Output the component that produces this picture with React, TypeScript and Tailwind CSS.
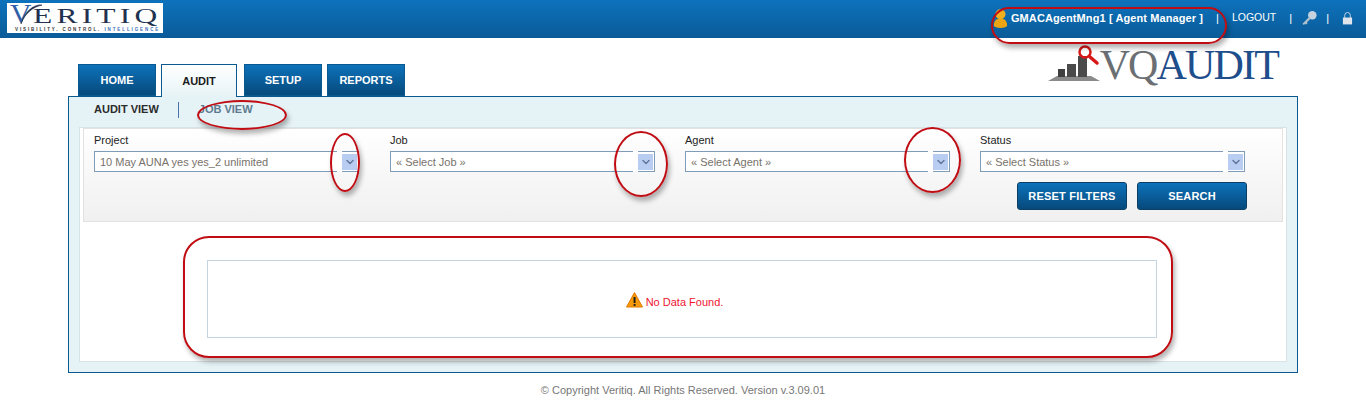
import React from 'react';
import { ChevronDown } from 'lucide-react';

const tabs = [
  { label: 'HOME', width: 'w-[78px]' },
  { label: 'AUDIT', width: 'w-[76px]', active: true },
  { label: 'SETUP', width: 'w-[78px]' },
  { label: 'REPORTS', width: 'w-[78px]' },
];

const filters = [
  { label: 'Project', value: '10 May AUNA yes yes_2 unlimited' },
  { label: 'Job', value: '« Select Job »' },
  { label: 'Agent', value: '« Select Agent »' },
  { label: 'Status', value: '« Select Status »' },
];

const Select = ({ label, value }: { label: string; value: string }) => (
  <div className="w-[265px]">
    <div className="h-[22px] text-[11px] leading-[22px] text-[#222]">{label}</div>
    <div className="relative flex h-[21px] w-[265px] items-center border border-[#7f9db9] bg-white">
      <span className="flex-1 pl-[5px] pt-[1px] text-[11px] text-[#77726a]">{value}</span>
      <span className="mr-[1px] flex h-[16px] w-[15px] items-center justify-center bg-[#b9cdf2]">
        <ChevronDown className="h-[12px] w-[12px] text-[#64789c]" strokeWidth={3} />
      </span>
      {/* gap between text field and arrow */}
      <span className="absolute right-[16px] top-[-1px] h-[21px] w-[5px] bg-white" />
    </div>
  </div>
);

const BlueButton = ({ children }: { children: React.ReactNode }) => (
  <button className="h-[28px] w-[110px] rounded-[3px] border border-[#0b3f66] bg-gradient-to-b from-[#0e72ba] to-[#064a7c] text-[11px] font-bold tracking-[0.2px] text-white">
    {children}
  </button>
);

const VeritiqLogo = () => (
  <div className="relative ml-[7px] mt-[3px] h-[30px] w-[156px] bg-white pl-[3px]">
    <div className="flex h-[24px] items-end font-['Liberation_Serif',serif] text-[#22314f]">
      <span className="w-[23px] origin-bottom-left scale-x-110 text-[27px] leading-[25px] text-[#2f5fa8]">V</span>
      <span className="origin-bottom-left scale-x-150 whitespace-nowrap text-[21px] leading-[21px] tracking-[2.8px]">ERITIQ</span>
    </div>
    <div className="ml-[5px] whitespace-nowrap text-[4.5px] font-bold leading-[6px] tracking-[1.9px] text-[#333]">
      VISIBILITY. CONTROL. <span className="text-[#3b6db5]">INTELLIGENCE</span>
    </div>
    {/* swoosh across the V */}
    <svg width="36" height="22" viewBox="0 0 36 22" className="absolute left-0 top-[1px]">
      <path d="M35 1 C28 0 18 6 14 20 C18 9 26 3 35 1 Z" fill="#1f2a44" stroke="#1f2a44" strokeWidth="0.6" />
    </svg>
  </div>
);

const AuditLogo = () => (
  <div className="mb-[11px] mr-[20px] flex items-start">
    <svg width="52" height="40" viewBox="0 0 52 40">
      <path d="M0 36 L9 31 H43 L52 36 Z" fill="#8a8a8a" />
      <rect x="10" y="24" width="7" height="8" fill="#3f3f3f" />
      <rect x="19" y="19" width="9" height="13" fill="#4a4a4a" />
      <rect x="30" y="11" width="9" height="21" fill="#4a4a4a" />
      <circle cx="37" cy="7" r="5.5" fill="none" stroke="#d81818" strokeWidth="2.5" />
      <path d="M42 12 L49 18" stroke="#d81818" strokeWidth="3.5" strokeLinecap="round" />
    </svg>
    <div className="flex h-[40px] items-center font-['Liberation_Serif',serif] text-[42px] leading-none tracking-[-1.85px]">
      <span className="text-[#6b6f73]">VQ</span>
      <span className="text-[#1f4e8c]">AUDIT</span>
    </div>
  </div>
);

const UserIcon = () => (
  <svg width="15" height="21" viewBox="0 0 18 24">
    <circle cx="9" cy="7" r="6" fill="#f2b01e" />
    <path d="M1 21 C1 14 5 12 9 12 C13 12 17 14 17 21 C14 24 4 24 1 21 Z" fill="#eea514" />
  </svg>
);

const KeyIcon = () => (
  <svg width="17" height="16" viewBox="0 0 17 17">
    <circle cx="11.5" cy="5.5" r="4.5" fill="#c6d3df" />
    <path d="M8.5 7 L1 14.5 L2.5 16 L4 14.5 L5 15.5 L6.5 14 L5.8 13 L10 9 Z" fill="#aebfce" />
  </svg>
);

const LockIcon = () => (
  <svg width="11" height="14" viewBox="0 0 12 14">
    <path d="M3 7 V4 a3 3 0 0 1 6 0 V7" fill="none" stroke="#cfd9e2" strokeWidth="1" />
    <rect x="1" y="6.5" width="10" height="7.5" fill="#dfe5eb" />
  </svg>
);

const WarningIcon = () => (
  <svg width="17" height="16" viewBox="0 0 17 16">
    <path d="M8.5 0.5 L16.5 15 H0.5 Z" fill="#f59a0c" stroke="#e07a00" strokeLinejoin="round" />
    <rect x="7.6" y="5" width="1.9" height="6" fill="#1b1b1b" />
    <rect x="7.6" y="12" width="1.9" height="1.9" fill="#1b1b1b" />
  </svg>
);

// red marks someone drew over the screenshot
const marks = [
  'left-[991px] top-[7px] h-[37px] w-[236px] rounded-[19px]',
  'left-[197px] top-[100px] h-[30px] w-[90px] rounded-[50%]',
  'left-[330px] top-[133px] h-[59px] w-[30px] rounded-[50%]',
  'left-[614px] top-[131px] h-[66px] w-[54px] rounded-[50%]',
  'left-[904px] top-[127px] h-[66px] w-[57px] rounded-[50%]',
  'left-[183px] top-[236px] h-[122px] w-[990px] rounded-[26px]',
];

export default function App() {
  return (
    <div className="relative h-[417px] w-[1366px] overflow-hidden bg-white font-['Liberation_Sans',Arial,sans-serif]">
      {/* Header */}
      <div className="flex h-[38px] items-start justify-between bg-gradient-to-b from-[#0d72bc] to-[#0a5b98]">
        <VeritiqLogo />
        <div className="flex h-[38px] items-center pb-[2px] pr-[13px] text-[11px] text-white">
          <UserIcon />
          <span className="ml-[3px] font-bold tracking-[0.1px]">GMACAgentMng1 [ Agent Manager ]</span>
          <span className="ml-[13px]">|</span>
          <span className="ml-[13px] text-[10.5px]">LOGOUT</span>
          <span className="ml-[13px]">|</span>
          <span className="ml-[9px]"><KeyIcon /></span>
          <span className="ml-[8px]">|</span>
          <span className="ml-[13px]"><LockIcon /></span>
        </div>
      </div>

      <div className="mx-[68px] w-[1230px]">
        {/* Tabs and product logo */}
        <div className="flex h-[58px] items-end justify-between">
          <div className="ml-[10px] flex items-end">
            {tabs.map((tab, i) => (
              <div
                key={tab.label}
                className={`${tab.width} ${i === 0 ? '' : i === 2 ? 'ml-[7px]' : 'ml-[5px]'} flex items-center justify-center text-[11px] font-bold ${
                  tab.active
                    ? 'relative z-10 -mb-[1px] h-[33px] border border-b-0 border-[#0a5a8f] bg-gradient-to-b from-white to-[#e6f3f6] text-[#1c1c1c]'
                    : 'h-[32px] border border-[#0a5a8f] bg-gradient-to-b from-[#0e72ba] to-[#064a7c] text-white'
                }`}
              >
                {tab.label}
              </div>
            ))}
          </div>
          <AuditLogo />
        </div>

        {/* Panel */}
        <div className="h-[277px] border border-[#0a5a8f] bg-[#e6f3f6] px-[10px] pb-[10px]">
          <div className="flex h-[30px] items-start pl-[15px] pt-[5px] text-[11px] font-bold">
            <span className="leading-[14px] text-[#2b2b2b]">AUDIT VIEW</span>
            <span className="ml-[19px] h-[16px] w-[1px] bg-[#4a74a8]" />
            <span className="ml-[20px] leading-[14px] text-[#5d7a90]">JOB VIEW</span>
          </div>
          <div className="h-[235px] border border-[#d9e2e5] bg-white">
            {/* Filters */}
            <div className="mx-[3px] h-[94px] border border-[#e2e2e2] bg-gradient-to-b from-white to-[#f0f0f0] px-[10px]">
              <div className="flex gap-[30px]">
                {filters.map((f, i) => (
                  <div key={f.label} className={i === 0 ? 'mr-[1px]' : ''}>
                    <Select label={f.label} value={f.value} />
                  </div>
                ))}
              </div>
              <div className="mt-[10px] flex justify-end gap-[10px] pr-[25px]">
                <BlueButton>RESET FILTERS</BlueButton>
                <BlueButton>SEARCH</BlueButton>
              </div>
            </div>

            {/* Empty result */}
            <div className="ml-[127px] mt-[38px] flex h-[78px] w-[950px] items-center justify-center gap-[3px] border border-[#c5d5e2] pr-[15px] pt-[2px] text-[11px] text-[#f0142f]">
              <WarningIcon />
              <span className="pt-[4px]">No Data Found.</span>
            </div>
          </div>
        </div>
      </div>

      {/* Footer */}
      <div className="pt-[11px] text-center text-[11px] leading-[13px] text-[#777]">
        © Copyright Veritiq. All Rights Reserved. Version v.3.09.01
      </div>

      {marks.map((m) => (
        <div key={m} className={`pointer-events-none absolute border-2 border-[#c00d14] shadow-[2px_4px_5px_rgba(0,0,0,0.3)] ${m}`} />
      ))}
    </div>
  );
}
